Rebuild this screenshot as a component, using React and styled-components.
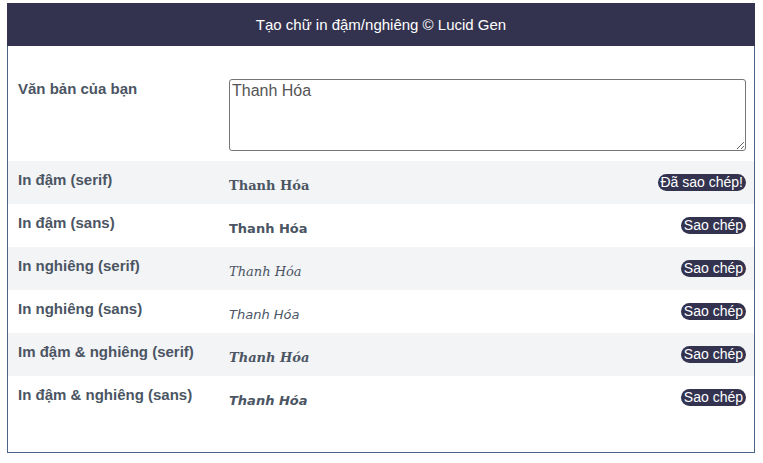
import styled, { createGlobalStyle } from "styled-components";

const GlobalStyle = createGlobalStyle`
  body {
    margin: 0;
    background: #ffffff;
    font-family: "Liberation Sans", Arial, sans-serif;
  }
`;

const Page = styled.div`
  padding: 3px 8px 0 7px;
`;

const Card = styled.div`
  border: 1px solid #4a6585;
  border-top: none;
  background: #ffffff;
`;

const Header = styled.div`
  height: 43px;
  background-color: #33334f;
  color: #ffffff;
  display: flex;
  align-items: center;
  justify-content: center;
  font-size: 15px;
  margin: 0 -1px;
`;

const Body = styled.div`
  padding: 20px 0 33px;
`;

const InputRow = styled.div`
  display: flex;
  padding: 13px 8px 10px 10px;
`;

const Row = styled.div`
  display: flex;
  align-items: center;
  height: 43px;
  padding: 0 8px 0 10px;
  background-color: ${(p) => (p.$striped ? "#f3f4f6" : "#ffffff")};
`;

const Label = styled.div`
  width: 211px;
  flex-shrink: 0;
  align-self: flex-start;
  padding-top: ${(p) => (p.$top ? "0" : "10px")};
  margin-top: ${(p) => (p.$top ? "1px" : "0")};
  font-size: 15px;
  font-weight: bold;
  color: #4b5563;
`;

const TextArea = styled.textarea`
  flex: 1;
  height: 72px;
  box-sizing: border-box;
  border: 1px solid #767676;
  border-radius: 3px;
  padding: 2px;
  font-family: "Liberation Sans", Arial, sans-serif;
  font-size: 16px;
  color: #555;
  resize: vertical;
  outline: none;
`;

const Value = styled.div`
  flex: 1;
  padding-top: 5px;
  font-family: ${(p) => (p.$serif ? `"DejaVu Serif", serif` : `"DejaVu Sans", sans-serif`)};
  font-weight: ${(p) => (p.$bold ? "bold" : "normal")};
  font-style: ${(p) => (p.$italic ? "italic" : "normal")};
  font-size: 13px;
  color: #4b5563;
`;

const CopyButton = styled.button`
  border: none;
  background-color: #33334f;
  color: #ffffff;
  font-family: "Liberation Sans", Arial, sans-serif;
  font-size: 14px;
  line-height: 17px;
  padding: 0 3px;
  border-radius: 9px;
  cursor: pointer;
`;

const styles = [
  { label: "In đậm (serif)", serif: true, bold: true, copied: true },
  { label: "In đậm (sans)", bold: true },
  { label: "In nghiêng (serif)", serif: true, italic: true },
  { label: "In nghiêng (sans)", italic: true },
  { label: "Im đậm & nghiêng (serif)", serif: true, bold: true, italic: true },
  { label: "In đậm & nghiêng (sans)", bold: true, italic: true },
];

const text = "Thanh Hóa";

const App = () => {
  return (
    <Page>
      <GlobalStyle />
      <Card>
        <Header>Tạo chữ in đậm/nghiêng © Lucid Gen</Header>
        <Body>
          <InputRow>
            <Label $top>Văn bản của bạn</Label>
            <TextArea defaultValue={text} />
          </InputRow>
          {styles.map((s, i) => (
            <Row key={s.label} $striped={i % 2 === 0}>
              <Label>{s.label}</Label>
              <Value $serif={s.serif} $bold={s.bold} $italic={s.italic}>
                {text}
              </Value>
              <CopyButton>{s.copied ? "Đã sao chép!" : "Sao chép"}</CopyButton>
            </Row>
          ))}
        </Body>
      </Card>
    </Page>
  );
};

export default App;
